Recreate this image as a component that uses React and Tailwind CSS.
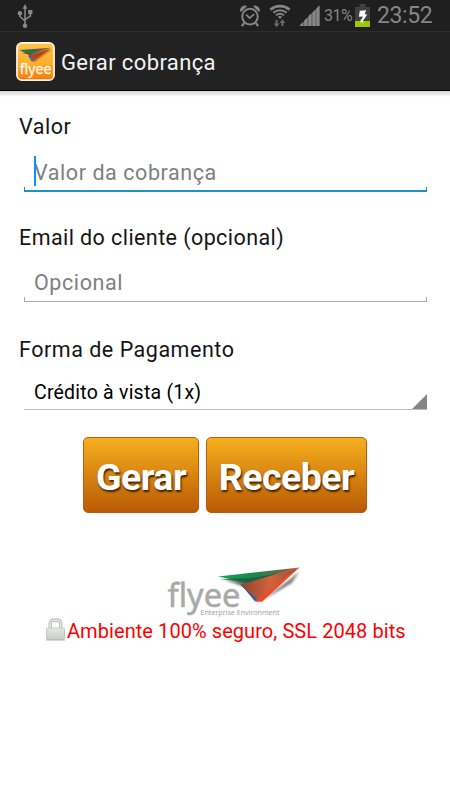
// Charge creation screen of the Flyee payment app (Android, Holo style)

// ─── Status bar icons ────────────────────────────────────────────────────────
function UsbIcon() {
  return (
    <svg width="16" height="26" viewBox="0 0 16 26" fill="none" stroke="#8a8a8a" strokeWidth="1.5">
      <path d="M8 5v17M2.9 11v2.5L8 18M13.4 10v3.2L8 16.5" />
      <path d="M8 1l2.4 4.8H5.6z" fill="#8a8a8a" stroke="none" />
      <circle cx="2.9" cy="10.3" r="2.2" fill="#8a8a8a" stroke="none" />
      <rect x="11.2" y="7" width="4.2" height="4.2" fill="#8a8a8a" stroke="none" />
      <circle cx="8" cy="22.7" r="2.2" fill="#8a8a8a" stroke="none" />
    </svg>
  );
}

function AlarmIcon() {
  return (
    <svg width="22" height="24" viewBox="0 0 22 24" fill="none" stroke="#868686">
      <circle cx="11" cy="12.6" r="7.8" strokeWidth="2" />
      <path d="M7.2 10.7l3.4 3.4 4.6-4" strokeWidth="1.8" />
      <path d="M5.2 19l-2.4 3.2M16.8 19l2.4 3.2" strokeWidth="2.2" />
      <path d="M1 7C1 3.6 3.2 1.2 7 1.4L7.8 2.4 2 8zM21 7C21 3.6 18.8 1.2 15 1.4L14.2 2.4 20 8z" fill="#868686" stroke="none" />
    </svg>
  );
}

function WifiIcon() {
  return (
    <svg width="22" height="24" viewBox="0 0 22 24" fill="none" stroke="#858585">
      <path d="M1.4 5.8C6.8.8 15.2.8 20.6 5.8" strokeWidth="2.8" />
      <path d="M4.3 8.8c3.9-3.5 9.5-3.5 13.4 0" strokeWidth="2.1" />
      <path d="M7 11.4c2.4-2.1 5.6-2.1 8 0" strokeWidth="1.9" />
      <path d="M8.8 12.8c1.4-1 3-1 4.4 0L11 15z" fill="#858585" stroke="none" />
      <path d="M7.6 16v5M13.4 22v-4" stroke="#6a6a6a" strokeWidth="2" />
      <path d="M4.6 19.6h6l-3 3.6zM10.4 19h6l-3-3.8z" fill="#6a6a6a" stroke="none" />
    </svg>
  );
}

function SignalIcon() {
  return (
    <svg width="22" height="22" viewBox="0 0 22 22">
      <path d="M0.5 21L20.5 0.5V21z" fill="#5c5c5c" />
      <path d="M1 21v-1l3-3v4zM5.2 21v-5.6l3.1-3V21zM9.4 21v-10l3-2.8V21zM13.5 21V7.2l3-2.7V21zM17.4 21V3.4L20.5.5V21z" fill="#878787" />
    </svg>
  );
}

function BatteryIcon() {
  return (
    <svg width="15" height="23" viewBox="0 0 15 23">
      <path d="M4.5 0h6v3H15v20H0V3h4.5z" fill="#404040" />
      <path d="M0 17h15v6H0z" fill="#99cc00" />
      <path d="M4.8 6.8l6.3-.6-1.4 4.1 2.6.2-4.4 6.6.6 1.2-3 .3.2-3.5 1 .7 1-3.2-3.8.2z" fill="#fff" />
    </svg>
  );
}

// ─── Brand marks ─────────────────────────────────────────────────────────────
function AppIcon() {
  return (
    <svg width="39" height="39" viewBox="0 0 40 40">
      <defs>
        <linearGradient id="app-bg" x1="0" y1="0" x2="0" y2="1">
          <stop offset="0" stopColor="#fdc64b" />
          <stop offset="0.55" stopColor="#fdae2c" />
          <stop offset="1" stopColor="#f8790b" />
        </linearGradient>
        <linearGradient id="app-wing" x1="0" y1="0" x2="1" y2="0">
          <stop offset="0" stopColor="#0b8052" />
          <stop offset="0.5" stopColor="#47664a" />
          <stop offset="1" stopColor="#b2572e" />
        </linearGradient>
      </defs>
      <rect x="1" y="1" width="38" height="38" rx="5" fill="url(#app-bg)" stroke="#fff3e4" strokeWidth="1.8" />
      <path d="M12 14l25-6-18 13z" fill="#d68a21" />
      <path d="M3.5 8.3L35.5 6 14 13.5z" fill="url(#app-wing)" />
      <path d="M5 11l9 .5 3 2z" fill="#704523" />
      <path d="M12.5 14L36 6.5 17 20z" fill="#ae4523" />
      <path d="M12.5 14l3.5 6 3-2z" fill="#3674a7" />
      <path d="M16 20.5L36 6.5 19 19.5z" fill="#df4b27" />
      <text x="3.8" y="33" fill="#fff8e8" fontSize="15" stroke="#fff8e8" strokeWidth="0.3" textLength="32.5" lengthAdjust="spacingAndGlyphs" className="font-['Noto_Sans',sans-serif]">flyee</text>
    </svg>
  );
}

function FlyeeLogo() {
  return (
    <svg width="140" height="56" viewBox="0 0 140 56">
      <defs>
        <linearGradient id="wing-green" x1="0" y1="0" x2="1" y2="0">
          <stop offset="0" stopColor="#16a45a" />
          <stop offset="0.4" stopColor="#168b50" />
          <stop offset="0.7" stopColor="#4d7148" />
          <stop offset="1" stopColor="#b65637" />
        </linearGradient>
        <linearGradient id="wing-orange" x1="0" y1="0" x2="1" y2="0">
          <stop offset="0" stopColor="#94442c" />
          <stop offset="0.5" stopColor="#d2623b" />
          <stop offset="1" stopColor="#a9492b" />
        </linearGradient>
        <linearGradient id="wing-shade" x1="0" y1="0" x2="1" y2="0">
          <stop offset="0" stopColor="#c5d0cb" />
          <stop offset="1" stopColor="#182722" />
        </linearGradient>
        <filter id="soft" x="-20%" y="-20%" width="140%" height="140%">
          <feGaussianBlur stdDeviation="0.8" />
        </filter>
      </defs>
      <path d="M94 37L133 7 126 18z" fill="#444" opacity="0.65" filter="url(#soft)" />
      <path d="M57 15l22 7 10-5-14-2z" fill="url(#wing-shade)" filter="url(#soft)" />
      <path d="M52 11.5L133.5 2.5 84 18z" fill="url(#wing-green)" />
      <path d="M54 14l30-1 26-4-28 9z" fill="#1b5a3e" opacity="0.8" />
      <path d="M75 19.5L88.5 36l3.5-.5-6-14z" fill="#2776cb" />
      <path d="M75 19.5L133.5 2.5 92 35z" fill="url(#wing-orange)" />
      <path d="M75 19.5L91 36" stroke="#6d3144" strokeWidth="1" />
      <path d="M88.5 36.7L133.5 2.5 96 36.7z" fill="#ef492b" />
      <text x="1.5" y="41.5" fill="#a9aaa8" fontSize="32" stroke="#a9aaa8" strokeWidth="0.5" textLength="73" lengthAdjust="spacingAndGlyphs" className="font-['Noto_Sans',sans-serif]">flyee</text>
      <text x="34.5" y="50" fill="#a4a4a4" fontSize="7" textLength="79" lengthAdjust="spacingAndGlyphs" className="font-['Noto_Sans',sans-serif]">Enterprise Environment</text>
    </svg>
  );
}

function LockIcon() {
  return (
    <svg width="21" height="23" viewBox="0 0 21 23">
      <defs>
        <linearGradient id="lock-body" x1="0" y1="0" x2="0" y2="1">
          <stop offset="0" stopColor="#e5e7e2" />
          <stop offset="1" stopColor="#c9cbc6" />
        </linearGradient>
      </defs>
      <path d="M5.2 11V5.8c0-2.3 1.3-3.6 3.2-3.6h4.2c1.9 0 3.2 1.3 3.2 3.6V11" fill="none" stroke="#b8bab5" strokeWidth="3.4" />
      <path d="M5.2 11V5.8c0-2.3 1.3-3.6 3.2-3.6h4.2c1.9 0 3.2 1.3 3.2 3.6V11" fill="none" stroke="#e4e5e1" strokeWidth="1.6" />
      <rect x="1.5" y="10" width="18" height="11.5" rx="1" fill="url(#lock-body)" stroke="#c6c8c3" />
      <path d="M1 22h19" stroke="#b4b4b4" />
    </svg>
  );
}

// ─── Form pieces ─────────────────────────────────────────────────────────────
function Field({ label, labelClass, placeholder, focused }) {
  return (
    <div className="h-[111px]">
      <div className={`h-[34px] pl-[19px] text-[21.5px] leading-[36px] text-[#151515] ${labelClass}`}>{label}</div>
      <div className={`ml-6 mr-[23px] flex flex-col justify-end ${focused ? 'h-[49px]' : 'h-[48px]'}`}>
        <div className="relative flex h-[43px] items-center pt-[16px] pl-[10px]">
          {focused && <span className="absolute top-[12px] left-[10px] h-[30px] w-[2px] bg-[#0a95ff]" />}
          <span className="text-[21.5px] tracking-[0.57px] text-[#808080]">{placeholder}</span>
        </div>
        <div className={focused ? 'h-[5px] shrink-0 border-x border-b-2 border-[#1c93c6]' : 'h-[5px] shrink-0 border-x border-b border-[#aaa]'} />
      </div>
    </div>
  );
}

function OrangeButton({ children, className }) {
  return (
    <button
      type="button"
      className={`flex h-[76px] items-center justify-center rounded-[5px] border border-[#c05a12] bg-linear-to-b from-[#f6b01e] to-[#b95a05] pt-[4px] text-[37.5px] font-bold tracking-[-0.5px] text-white [text-shadow:1px_2px_2px_#402000] ${className}`}
    >
      {children}
    </button>
  );
}

// ─── Main screen ─────────────────────────────────────────────────────────────
export default function App() {
  return (
    <div className="h-[800px] w-[450px] overflow-hidden bg-white font-[Roboto,sans-serif] whitespace-nowrap">
      {/* Status bar */}
      <div className="flex h-[31px] items-center bg-[#1f1f1f] pl-[17px] text-[#868686]">
        <UsbIcon />
        <div className="ml-[206px]"><AlarmIcon /></div>
        <div className="ml-[8px]"><WifiIcon /></div>
        <div className="ml-[8px]"><SignalIcon /></div>
        <span className="ml-[3px] w-[31px] pt-px text-[16px] tracking-[-0.5px]">31%</span>
        <div className="-mt-[1px]"><BatteryIcon /></div>
        <span className="ml-[7px] text-[23px] leading-none tracking-[-0.4px]">23:52</span>
      </div>

      {/* Action bar */}
      <div className="flex h-[60px] items-center border-t border-b border-t-[#2d2d2d] border-b-black bg-[#222] pl-[16px]">
        <AppIcon />
        <span className="ml-[6px] pt-[3px] text-[22px] tracking-[0.38px] text-[#f3f3f3]">Gerar cobrança</span>
      </div>
      <div className="h-[6px] bg-linear-to-b from-[#d4d4d4] to-white" />

      {/* Form */}
      <div className="pt-[12px]">
        <Field label="Valor" labelClass="tracking-[0.5px]" placeholder="Valor da cobrança" focused />
        <Field label="Email do cliente (opcional)" labelClass="tracking-[0.42px]" placeholder="Opcional" />
        <div className="h-[34px] pl-[19px] text-[21.5px] leading-[37px] tracking-[0.52px] text-[#151515]">Forma de Pagamento</div>
        <div className="ml-6 mr-[23px] flex h-[45px] items-end justify-between border-b border-[#bbb] pl-[10px]">
          <span className="text-[19.5px] leading-[32px] tracking-[0.22px] text-black">Crédito à vista (1x)</span>
          <svg width="15" height="15" viewBox="0 0 15 15"><path d="M15 0v15H0z" fill="#868686" /></svg>
        </div>
      </div>

      {/* Actions */}
      <div className="mt-[27px] flex gap-[7px] pl-[83px]">
        <OrangeButton className="w-[116px]">Gerar</OrangeButton>
        <OrangeButton className="w-[161px]">Receber</OrangeButton>
      </div>

      {/* Brand and security note */}
      <div className="mt-[52px] pl-[166px]"><FlyeeLogo /></div>
      <div className="-mt-[4px] flex items-center pl-[45px]">
        <LockIcon />
        <span className="ml-[1px] pt-[3px] text-[20px] leading-[22px] tracking-[0.07px] text-[#f00]">Ambiente 100% seguro, SSL 2048 bits</span>
      </div>
    </div>
  );
}
